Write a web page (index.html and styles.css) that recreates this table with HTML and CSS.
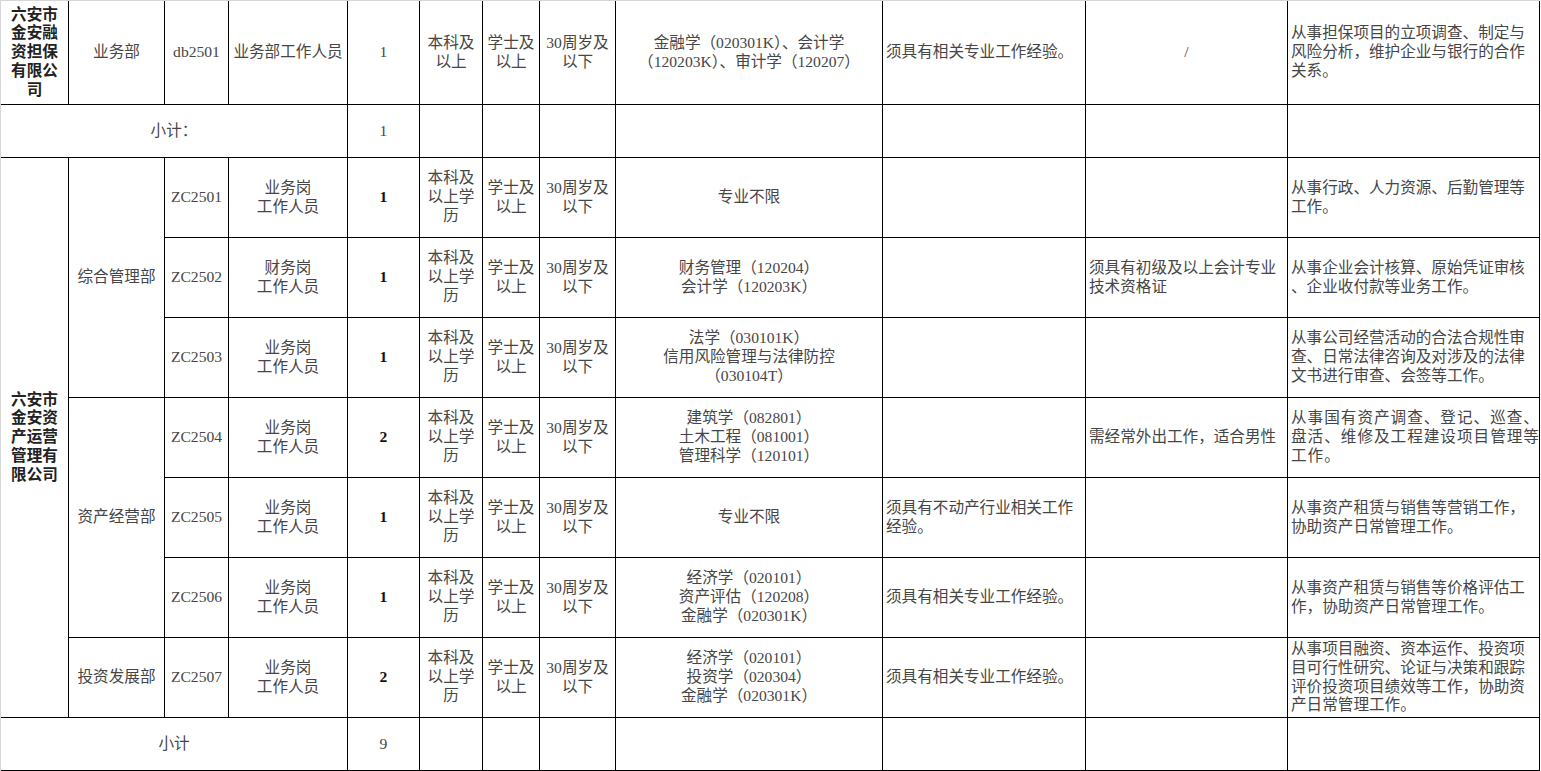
FILE: index.html
```html
<!DOCTYPE html>
<html lang="zh-CN">
<head>
<meta charset="utf-8">
<title>招聘岗位表</title>
<link rel="stylesheet" href="styles.css">
</head>
<body>
<table class="jobs">
  <colgroup>
    <col class="c-company">
    <col class="c-dept">
    <col class="c-code">
    <col class="c-post">
    <col class="c-num">
    <col class="c-edu">
    <col class="c-degree">
    <col class="c-age">
    <col class="c-major">
    <col class="c-req">
    <col class="c-other">
    <col class="c-desc">
  </colgroup>
  <tbody>
    <tr class="r-main">
      <td class="company">六安市<br>金安融<br>资担保<br>有限公<br>司</td>
      <td>业务部</td>
      <td>db2501</td>
      <td class="nowrap">业务部工作人员</td>
      <td>1</td>
      <td>本科及<br>以上</td>
      <td>学士及<br>以上</td>
      <td>30周岁及<br>以下</td>
      <td>金融学（020301K）、会计学<br>（120203K）、审计学（120207）</td>
      <td class="left">须具有相关专业工作经验。</td>
      <td>/</td>
      <td class="left">从事担保项目的立项调查、制定与<br>风险分析，维护企业与银行的合作<br>关系。</td>
    </tr>
    <tr class="r-sub">
      <td colspan="4">小计：</td>
      <td>1</td>
      <td></td><td></td><td></td><td></td><td></td><td></td><td></td>
    </tr>
    <tr class="r-job">
      <td class="company" rowspan="7">六安市<br>金安资<br>产运营<br>管理有<br>限公司</td>
      <td rowspan="3">综合管理部</td>
      <td>ZC2501</td>
      <td>业务岗<br>工作人员</td>
      <td class="bold">1</td>
      <td>本科及<br>以上学<br>历</td>
      <td>学士及<br>以上</td>
      <td>30周岁及<br>以下</td>
      <td>专业不限</td>
      <td class="left"></td>
      <td class="left"></td>
      <td class="left">从事行政、人力资源、后勤管理等<br>工作。</td>
    </tr>
    <tr class="r-job">
      <td>ZC2502</td>
      <td>财务岗<br>工作人员</td>
      <td class="bold">1</td>
      <td>本科及<br>以上学<br>历</td>
      <td>学士及<br>以上</td>
      <td>30周岁及<br>以下</td>
      <td>财务管理（120204）<br>会计学（120203K）</td>
      <td class="left"></td>
      <td class="left">须具有初级及以上会计专业<br>技术资格证</td>
      <td class="left">从事企业会计核算、原始凭证审核<br>、企业收付款等业务工作。</td>
    </tr>
    <tr class="r-job">
      <td>ZC2503</td>
      <td>业务岗<br>工作人员</td>
      <td class="bold">1</td>
      <td>本科及<br>以上学<br>历</td>
      <td>学士及<br>以上</td>
      <td>30周岁及<br>以下</td>
      <td>法学（030101K）<br>信用风险管理与法律防控<br>（030104T）</td>
      <td class="left"></td>
      <td class="left"></td>
      <td class="left">从事公司经营活动的合法合规性审<br>查、日常法律咨询及对涉及的法律<br>文书进行审查、会签等工作。</td>
    </tr>
    <tr class="r-job">
      <td rowspan="3">资产经营部</td>
      <td>ZC2504</td>
      <td>业务岗<br>工作人员</td>
      <td class="bold">2</td>
      <td>本科及<br>以上学<br>历</td>
      <td>学士及<br>以上</td>
      <td>30周岁及<br>以下</td>
      <td>建筑学（082801）<br>土木工程（081001）<br>管理科学（120101）</td>
      <td class="left"></td>
      <td class="left">需经常外出工作，适合男性</td>
      <td class="left spread">从事国有资产调查、登记、巡查、<br>盘活、维修及工程建设项目管理等<br>工作。</td>
    </tr>
    <tr class="r-job">
      <td>ZC2505</td>
      <td>业务岗<br>工作人员</td>
      <td class="bold">1</td>
      <td>本科及<br>以上学<br>历</td>
      <td>学士及<br>以上</td>
      <td>30周岁及<br>以下</td>
      <td>专业不限</td>
      <td class="left">须具有不动产行业相关工作<br>经验。</td>
      <td class="left"></td>
      <td class="left">从事资产租赁与销售等营销工作，<br>协助资产日常管理工作。</td>
    </tr>
    <tr class="r-job">
      <td>ZC2506</td>
      <td>业务岗<br>工作人员</td>
      <td class="bold">1</td>
      <td>本科及<br>以上学<br>历</td>
      <td>学士及<br>以上</td>
      <td>30周岁及<br>以下</td>
      <td>经济学（020101）<br>资产评估（120208）<br>金融学（020301K）</td>
      <td class="left">须具有相关专业工作经验。</td>
      <td class="left"></td>
      <td class="left">从事资产租赁与销售等价格评估工<br>作，协助资产日常管理工作。</td>
    </tr>
    <tr class="r-job">
      <td>投资发展部</td>
      <td>ZC2507</td>
      <td>业务岗<br>工作人员</td>
      <td class="bold">2</td>
      <td>本科及<br>以上学<br>历</td>
      <td>学士及<br>以上</td>
      <td>30周岁及<br>以下</td>
      <td>经济学（020101）<br>投资学（020304）<br>金融学（020301K）</td>
      <td class="left">须具有相关专业工作经验。</td>
      <td class="left"></td>
      <td class="left">从事项目融资、资本运作、投资项<br>目可行性研究、论证与决策和跟踪<br>评价投资项目绩效等工作，协助资<br>产日常管理工作。</td>
    </tr>
    <tr class="r-sub">
      <td colspan="4">小计</td>
      <td>9</td>
      <td></td><td></td><td></td><td></td><td></td><td></td><td></td>
    </tr>
  </tbody>
</table>
</body>
</html>
```

FILE: styles.css
```css
* {
  box-sizing: border-box;
}

html, body {
  margin: 0;
  padding: 0;
  background: #ffffff;
}

.jobs {
  width: 1540px;
  table-layout: fixed;
  border-collapse: separate;
  border-spacing: 0;
  border-top: 1px solid #d6d6d6;
  border-left: 1px solid #d6d6d6;
  font-family: "Liberation Serif", "Noto Sans CJK SC", serif;
  font-size: 15.6px;
  line-height: 18.7px;
  color: #464646;
}

.c-company { width: 68px; }
.c-dept { width: 96px; }
.c-code { width: 64px; }
.c-post { width: 119px; }
.c-num { width: 72px; }
.c-edu { width: 63px; }
.c-degree { width: 57px; }
.c-age { width: 76px; }
.c-major { width: 267px; }
.c-req { width: 203px; }
.c-other { width: 202px; }
.c-desc { width: 252px; }

.jobs td {
  border-right: 1px solid #000;
  border-bottom: 1px solid #000;
  padding: 0 3px;
  text-align: center;
  vertical-align: middle;
  white-space: nowrap;
  overflow: hidden;
}

.r-main { height: 104px; }
.r-sub { height: 53px; }
.r-job { height: 80px; }

.jobs td.left {
  text-align: left;
}

.jobs td.company {
  font-weight: bold;
  color: #222;
  line-height: 18.8px;
}

.jobs td.bold {
  font-weight: bold;
  color: #111;
}

.jobs td.spread {
  letter-spacing: 1px;
}
```
